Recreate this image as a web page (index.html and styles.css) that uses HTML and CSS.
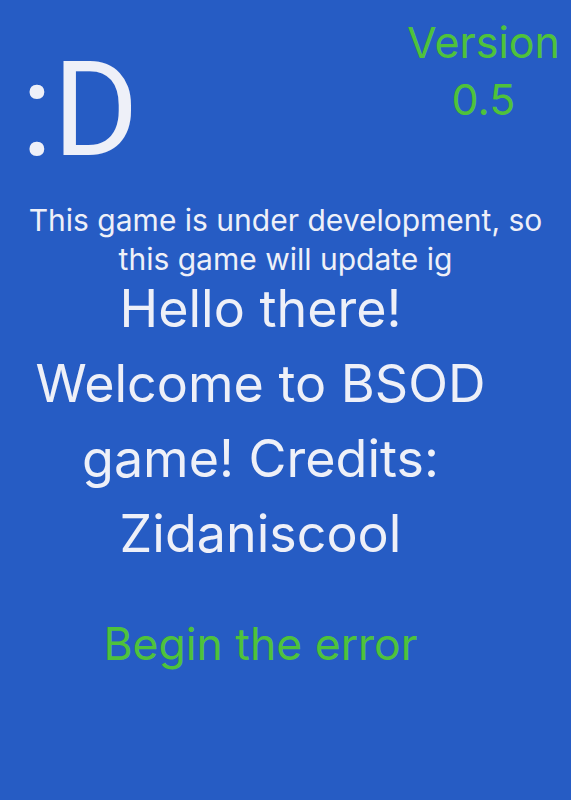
FILE: index.html
```html
<!DOCTYPE html>
<html>
<head>
<meta charset="utf-8">
<link rel="stylesheet" href="styles.css">
</head>
<body>
<div class="page">
  <header class="top">
    <div class="logo">:D</div>
    <div class="version">Version<br>0.5</div>
  </header>
  <p class="note">This game is under development, so this game will update ig</p>
  <h1 class="title">Hello there! Welcome to BSOD game! Credits: Zidaniscool</h1>
  <div class="begin">Begin the error</div>
</div>
</body>
</html>
```
FILE: styles.css
```css
html, body {
  margin: 0;
  padding: 0;
  background: #265cc4;
}
body {
  font-family: Inter, "Noto Sans", sans-serif;
  color: #eef0f8;
  width: 571px;
  height: 800px;
  overflow: hidden;
}
.page {
  display: flex;
  flex-direction: column;
  align-items: center;
}
.top {
  align-self: stretch;
  display: flex;
  justify-content: space-between;
  align-items: flex-start;
  padding: 0 11px 0 21px;
}
.logo {
  font-family: Roboto, Inter, sans-serif;
  font-size: 131px;
  line-height: 1;
  font-weight: 400;
  margin-top: 45px;
}
.version {
  color: #4fc23b;
  font-size: 43px;
  line-height: 57px;
  text-align: center;
  margin-top: 14px;
}
.note {
  margin: 25px 0 -8px;
  font-size: 30px;
  line-height: 39px;
  text-align: center;
  width: 535px;
}
.title {
  margin: 0 50px 0 0;
  font-size: 52px;
  font-weight: 400;
  line-height: 75px;
  text-align: center;
  width: 470px;
}
.begin {
  margin: 46px 50px 0 0;
  color: #4fc23b;
  font-size: 44.5px;
}
```
